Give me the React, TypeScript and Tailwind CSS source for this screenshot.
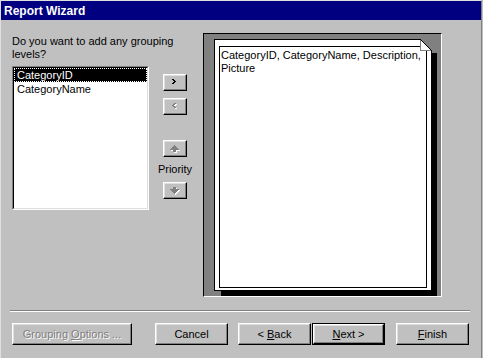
import React from "react"

// Win95-style bevels
const raised =
  "border border-t-white border-l-white border-r-black border-b-black shadow-[inset_-1px_-1px_0_#808080,inset_1px_1px_0_#dfdfdf] bg-[#c0c0c0]"
const disabledText = "text-[#808080] [text-shadow:1px_1px_0_#fff]"

function Chevron({ left, disabled }: { left?: boolean; disabled?: boolean }) {
  const rows = [0, 1, 2, 1, 0]
  const cells = (fill: string, dx: number) =>
    rows.map((x, y) => (
      <rect key={fill + y} x={(left ? 2 - x : x) + dx} y={y + dx} width={2} height={1} fill={fill} />
    ))
  return (
    <svg width="6" height="7" viewBox="0 0 6 7" shapeRendering="crispEdges">
      {disabled && cells("#ffffff", 1)}
      {cells(disabled ? "#808080" : "#000000", 0)}
    </svg>
  )
}

function PriorityArrow({ down }: { down?: boolean }) {
  // rows of the arrow: [start, width]
  const rows: [number, number][] = [
    [4, 1],
    [3, 3],
    [2, 5],
    [1, 7],
    [0, 9],
    [3, 3],
    [3, 3],
  ]
  const shape = down ? [...rows].reverse() : rows
  const draw = (fill: string, d: number) =>
    shape.map(([x, w], y) => <rect key={fill + y} x={x + d} y={y + d} width={w} height={1} fill={fill} />)
  return (
    <svg width="10" height="8" viewBox="0 0 10 8" shapeRendering="crispEdges">
      {draw("#ffffff", 1)}
      {draw("#808080", 0)}
    </svg>
  )
}

function SmallButton({ children }: { children: React.ReactNode }) {
  return <div className={`w-[24px] h-[17px] flex items-center justify-center ${raised}`}>{children}</div>
}

export default function App() {
  return (
    <div className="w-[483px] h-[358px] bg-[#c0c0c0] overflow-hidden font-['Liberation_Sans',Arial,sans-serif] text-[11px] leading-[13px] text-black">
      <div className="w-[482px] h-[358px] border-t border-l border-r border-t-[#dfdfdf] border-l-[#dfdfdf] border-r-[#808080]">
        {/* Title bar */}
        <div className="h-[19px] bg-[#000080] pl-[3px] pt-[1px] text-white text-[12px] font-bold leading-[18px]">
          Report Wizard
        </div>

        {/* Main content */}
        <div className="flex items-start pt-[13px] pl-[11px]">
          {/* Left column */}
          <div className="w-[137px]">
            <div className="mt-[2px] whitespace-nowrap">
              Do you want to add any grouping
              <br />
              levels?
            </div>
            <div className="mt-[5px] h-[144px] bg-white border border-t-[#808080] border-l-[#808080] border-r-white border-b-white">
              <div className="h-full border border-t-black border-l-black border-r-[#dfdfdf] border-b-[#dfdfdf]">
                <div className="h-[14px] leading-[12px] bg-black text-white border border-dotted border-white pl-[2px]">
                  CategoryID
                </div>
                <div className="h-[14px] leading-[14px] pl-[3px]">CategoryName</div>
              </div>
            </div>
          </div>

          {/* Middle buttons */}
          <div className="ml-[14px] w-[24px] pt-[41px] flex flex-col items-center">
            <SmallButton>
              <Chevron />
            </SmallButton>
            <div className="mt-[7px]">
              <SmallButton>
                <Chevron left disabled />
              </SmallButton>
            </div>
            <div className="mt-[25px]">
              <SmallButton>
                <PriorityArrow />
              </SmallButton>
            </div>
            <div className="mt-[6px] whitespace-nowrap">Priority</div>
            <div className="mt-[6px]">
              <SmallButton>
                <PriorityArrow down />
              </SmallButton>
            </div>
          </div>

          {/* Preview */}
          <div className="ml-[16px] w-[239px] h-[264px] bg-[#808080] border border-t-black border-l-black border-r-white border-b-white pl-[10px] pt-[5px]">
            <div className="relative w-[218px] h-[252px] bg-white border border-black pt-[6px] px-[4px] pb-[2px] shadow-[6px_6px_0_-1px_#000]">
              <div className="h-full border border-black pl-[1px] pt-[2px]">
                CategoryID, CategoryName, Description,
                <br />
                Picture
              </div>
              <svg
                className="absolute left-[205px] top-[-1px]"
                width="18"
                height="16"
                viewBox="0 0 18 16"
                shapeRendering="crispEdges"
              >
                <polygon points="0,0 18,0 18,14 12,14 12,12" fill="#808080" />
                <polygon points="0,0 12,12 0,12" fill="#ffffff" />
                <line x1="0.5" y1="0" x2="0.5" y2="12" stroke="#808080" strokeWidth="1" />
                <line x1="0" y1="11.5" x2="12" y2="11.5" stroke="#808080" strokeWidth="1" />
                <line x1="0" y1="0" x2="12" y2="12" stroke="#000000" strokeWidth="1" />
              </svg>
            </div>
          </div>
        </div>

        {/* Separator */}
        <div className="mt-[13px] ml-[9px] w-[460px] h-[2px] border-t border-b border-t-[#808080] border-b-white" />

        {/* Buttons */}
        <div className="mt-[11px] flex items-start pl-[11px]">
          <div className={`w-[120px] h-[22px] flex items-center justify-center ${raised} ${disabledText}`}>
            <span>
              Grouping <u>O</u>ptions ...
            </span>
          </div>
          <div className={`ml-[23px] w-[73px] h-[22px] flex items-center justify-center ${raised}`}>Cancel</div>
          <div className={`ml-[10px] w-[73px] h-[22px] flex items-center justify-center ${raised}`}>
            <span>
              &lt; <u>B</u>ack
            </span>
          </div>
          <div className="ml-[1px] w-[73px] h-[22px] border border-black">
            <div className={`h-full flex items-center justify-center ${raised}`}>
              <span>
                <u>N</u>ext &gt;
              </span>
            </div>
          </div>
          <div className={`ml-[11px] w-[73px] h-[22px] flex items-center justify-center ${raised}`}>
            <span>
              <u>F</u>inish
            </span>
          </div>
        </div>
      </div>
    </div>
  )
}
